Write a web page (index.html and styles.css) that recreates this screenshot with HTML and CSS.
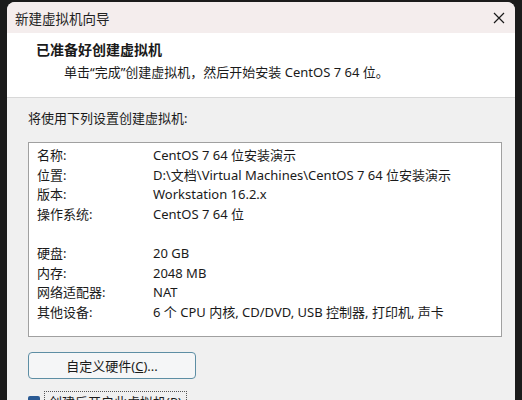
FILE: index.html
```html
<!DOCTYPE html>
<html lang="zh-CN">
<head>
    <meta charset="UTF-8" />
    <title>新建虚拟机向导</title>
    <link rel="stylesheet" href="styles.css">
</head>
<body>
    <div class="window">
        <div class="titlebar">
            <span class="title">新建虚拟机向导</span>
            <svg class="close" width="12" height="12" viewBox="0 0 12 12">
                <path d="M1 1 L11 11 M11 1 L1 11" stroke="#1a1a1a" stroke-width="1.2" fill="none" />
            </svg>
        </div>

        <div class="header">
            <h2>已准备好创建虚拟机</h2>
            <p>单击“完成”创建虚拟机，然后开始安装 CentOS 7 64 位。</p>
        </div>

        <div class="content">
            <p class="intro">将使用下列设置创建虚拟机:</p>

            <div class="summary">
                <div class="row"><span class="label">名称:</span><span>CentOS 7 64 位安装演示</span></div>
                <div class="row"><span class="label">位置:</span><span>D:\文档\Virtual Machines\CentOS 7 64 位安装演示</span></div>
                <div class="row"><span class="label">版本:</span><span>Workstation 16.2.x</span></div>
                <div class="row"><span class="label">操作系统:</span><span>CentOS 7 64 位</span></div>
                <div class="row"></div>
                <div class="row"><span class="label">硬盘:</span><span>20 GB</span></div>
                <div class="row"><span class="label">内存:</span><span>2048 MB</span></div>
                <div class="row"><span class="label">网络适配器:</span><span>NAT</span></div>
                <div class="row"><span class="label">其他设备:</span><span>6 个 CPU 内核, CD/DVD, USB 控制器, 打印机, 声卡</span></div>
            </div>

            <button class="button">自定义硬件(<u>C</u>)...</button>

            <div class="check">
                <span class="box"></span>
                <span class="check-label">创建后开启此虚拟机(P)</span>
            </div>
        </div>
    </div>
</body>
</html>
```

FILE: styles.css
```css
body {
    margin: 0;
    background: #1b1b1b;
    font-family: "Noto Sans", "Noto Sans CJK SC", sans-serif;
    color: #1a1a1a;
}

.window {
    margin: 2px 7px 0;
    width: 508px;
    height: 398px;
    border-radius: 8px 8px 0 0;
    overflow: hidden;
    background: #f0f0f0;
}

.titlebar {
    height: 31px;
    background: #f4eded;
    display: flex;
    justify-content: space-between;
    align-items: center;
    padding: 0 10px 0 8px;
}

.title {
    font-size: 13.5px;
    color: #222;
}

.header {
    background: #fff;
    height: 63px;
    border-bottom: 1px solid #d8d8d8;
    padding-top: 1px;
}

.header h2 {
    margin: 6px 0 0 29px;
    font-size: 14px;
    font-weight: 700;
    line-height: 20px;
}

.header p {
    margin: 2px 0 0 57px;
    font-size: 13px;
    line-height: 20px;
}

.content {
    padding: 10px 13px 0 21px;
}

.intro {
    margin: 0;
    font-size: 13px;
    line-height: 20px;
}

.summary {
    margin-top: 14px;
    background: #fff;
    border: 1px solid #a0a0a0;
    height: 190px;
    padding: 3px 8px 0;
    font-size: 13px;
}

.row {
    display: flex;
    height: 19.6px;
    line-height: 19.6px;
    white-space: nowrap;
}

.label {
    width: 116px;
    flex-shrink: 0;
}

.button {
    margin-top: 15px;
    width: 168px;
    height: 27px;
    background: #f5f6f7;
    border: 1px solid #5d8ea4;
    border-radius: 4px;
    font-family: "Noto Sans", "Noto Sans CJK SC", sans-serif;
    font-size: 13px;
    color: #1a1a1a;
    padding: 0;
}

.check {
    display: flex;
    align-items: center;
    gap: 4px;
    margin-top: 12px;
    font-size: 13px;
}

.box {
    width: 12px;
    height: 12px;
    background: #2a5a93;
    border-radius: 2px;
}

.check-label {
    border: 1px dotted #555;
    padding: 0 4px;
}
```
